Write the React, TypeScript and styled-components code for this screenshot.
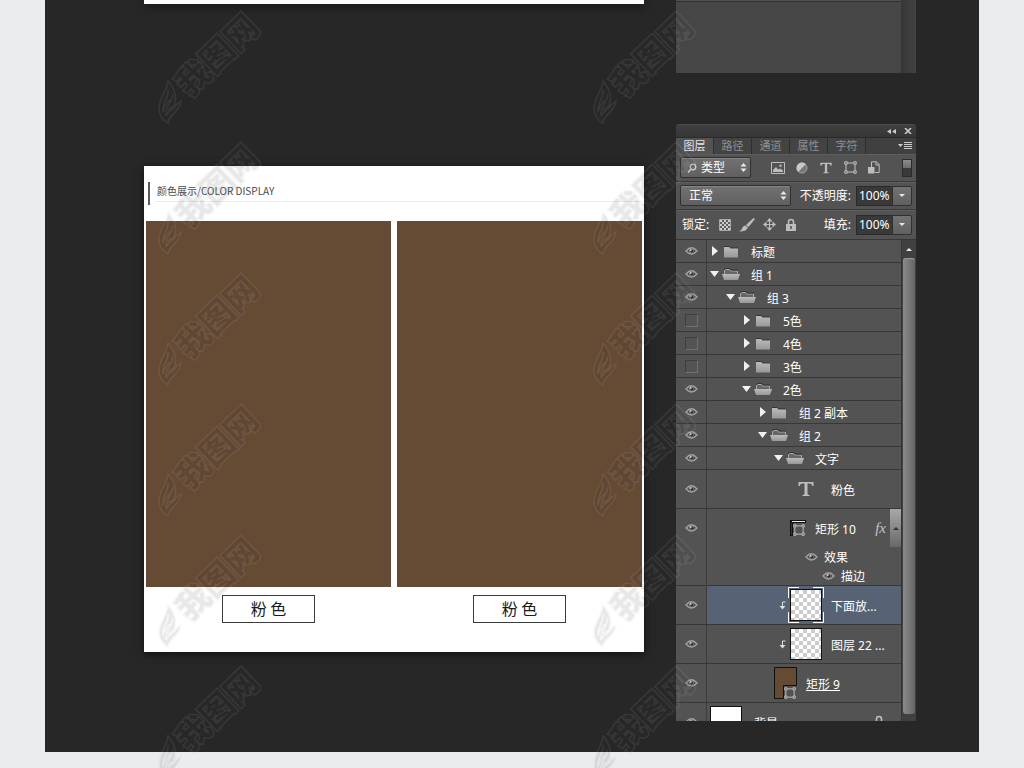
import React from 'react';
import styled, { createGlobalStyle, css } from 'styled-components';

const GlobalStyle = createGlobalStyle`
  *, *::before, *::after { box-sizing: border-box; }
  body {
    margin: 0;
    background: #ebecf0;
    font-family: "Noto Sans", "Noto Sans CJK SC", sans-serif;
    font-size: 12px;
    line-height: 16px;
  }
  button, input, select { font: inherit; color: inherit; }
`;

const Page = styled.div`
  position: relative;
  overflow: hidden;
  padding: 0 45px 16px;
`;

const Canvas = styled.main`
  display: grid;
  grid-template-columns: minmax(0, 1fr) 240px;
  gap: 32px;
  align-items: start;
  padding: 0 63px 31px 99px;
  background: #272727;
`;

const Column = styled.div<{ $gap: number }>`
  display: flex;
  flex-direction: column;
  gap: ${(p) => p.$gap}px;
`;

/* ---------- product cards ---------- */

const Card = styled.section`
  background: #fff;
  box-shadow: 0 2px 8px rgba(0, 0, 0, 0.6);
`;

const CardEnd = styled(Card)`
  height: 4px;
`;

const ColorCard = styled(Card)`
  padding: 16px 2px 29px;
`;

const CardHeader = styled.header`
  display: flex;
  gap: 5px;
  height: 39px;
  padding-left: 2px;
`;

const HeaderBar = styled.span`
  width: 2px;
  height: 23px;
  background: #5a5a5a;
`;

const CardTitle = styled.h2`
  flex: 1;
  height: 20px;
  margin: 0;
  padding: 1px 2px;
  border-bottom: 1px solid #ececec;
  color: #4a4a4a;
  font: 400 10px/16px "Noto Sans CJK SC", sans-serif;
`;

const Swatches = styled.div`
  display: grid;
  grid-template-columns: 1fr 1fr;
  gap: 6px;
`;

const Figure = styled.figure`
  display: flex;
  flex-direction: column;
  align-items: center;
  gap: 8px;
  margin: 0;
`;

const Swatch = styled.div`
  width: 100%;
  aspect-ratio: 245 / 366;
  background: #654a34;
`;

const SwatchName = styled.figcaption`
  width: 93px;
  height: 28px;
  border: 1px solid #3c3c3c;
  color: #1c1c1c;
  text-align: center;
  font: 400 16px/25px "Noto Sans CJK SC", sans-serif;
`;

/* ---------- panels ---------- */

const PanelEnd = styled.div`
  display: grid;
  grid-template-columns: 1fr 15px;
  height: 73px;
`;

const PanelEndBody = styled.div`
  border-top: 1px solid #505050;
  background: #464646;
  box-shadow: inset 0 1px 0 #333;
`;

const PanelEndTrack = styled.div`
  background: linear-gradient(90deg, #363636, #434343);
`;

const Panel = styled.aside`
  overflow: hidden;
  border-radius: 4px 4px 0 0;
  background: #535353;
  color: #fff;
`;

const TitleBar = styled.div`
  display: flex;
  justify-content: flex-end;
  align-items: center;
  gap: 8px;
  height: 13px;
  padding-right: 4px;
  border-top: 1px solid #4a4a4a;
  background: linear-gradient(#404040, #363636);
`;

const IconButton = styled.button`
  display: flex;
  align-items: center;
  justify-content: center;
  padding: 0;
  border: 0;
  background: none;
  color: #bdbdbd;
`;

const TabBar = styled.div`
  display: flex;
  height: 17px;
  border-top: 1px solid #2a2a2a;
  background: #404040;
`;

const Tab = styled.button<{ $active?: boolean }>`
  width: 38px;
  padding: 0;
  border: 0;
  border-right: 1px solid #2e2e2e;
  background: ${(p) => (p.$active ? '#535353' : '#434343')};
  color: ${(p) => (p.$active ? '#e4e6ea' : '#8e9196')};
  font-size: 11px;
  text-align: center;
`;

const MenuButton = styled(IconButton)`
  margin-left: auto;
  padding-right: 4px;
`;

const ControlRow = styled.div<{ $last?: boolean }>`
  display: flex;
  align-items: center;
  height: ${(p) => (p.$last ? 29 : 28)}px;
  padding: 0 4px;
  border-bottom: ${(p) => (p.$last ? 0 : 1)}px solid #3a3a3a;
  box-shadow: inset 0 1px 0 #5e5e5e;
`;

const SelectBox = styled.div<{ $width: number; $inset?: number }>`
  display: flex;
  align-items: center;
  gap: 4px;
  width: ${(p) => p.$width}px;
  height: 21px;
  padding: 0 3px 0 ${(p) => p.$inset ?? 4}px;
  border: 1px solid #303030;
  border-radius: 2px;
  background: linear-gradient(#727272, #606060);
  box-shadow: inset 0 1px 0 #858585;
`;

const Select = styled.select`
  flex: 1;
  min-width: 0;
  padding: 0;
  border: 0;
  appearance: none;
  background: transparent;
  outline: none;
`;

const IconGroup = styled.div<{ $gap: number; $start: number }>`
  display: flex;
  gap: ${(p) => p.$gap}px;
  margin-left: ${(p) => p.$start}px;
`;

const ToolButton = styled(IconButton)`
  width: 16px;
  height: 16px;
`;

const FilterSwitch = styled.button`
  width: 10px;
  height: 18px;
  margin-left: auto;
  padding: 0;
  border: 1px solid #2b2b2b;
  background: linear-gradient(#8c8c8c, #6e6e6e 50%, #3a3a3a 50%);
`;

const LockLabel = styled.span`
  padding-left: 2px;
`;

const ValueField = styled.label`
  display: flex;
  align-items: center;
  gap: 5px;
  margin-left: auto;
  white-space: nowrap;
`;

const ValueInput = styled.input`
  width: 36px;
  height: 20px;
  padding: 0 0 0 2px;
  border: 1px solid #2a2a2a;
  border-right: 0;
  background: #393939;
`;

const DropButton = styled(IconButton)`
  width: 20px;
  height: 20px;
  border: 1px solid #303030;
  border-radius: 0 2px 2px 0;
  background: linear-gradient(#727272, #606060);
`;

const ListArea = styled.div`
  display: grid;
  grid-template-columns: 1fr 15px;
  grid-template-rows: 481px;
  border-top: 1px solid #373737;
`;

const List = styled.ul`
  margin: 0;
  padding: 0;
  overflow: hidden;
  list-style: none;
`;

const Row = styled.li<{ $height: number }>`
  display: grid;
  grid-template-columns: 31px 1fr;
  height: ${(p) => p.$height}px;
  border-bottom: 1px solid #373737;
`;

const EyeCell = styled.div`
  display: flex;
  justify-content: center;
  align-items: center;
  border-right: 1px solid #3b3b3b;
`;

const TopEyeCell = styled(EyeCell)`
  align-items: flex-start;
  padding-top: 14px;
`;

const HiddenBox = styled.span`
  width: 13px;
  height: 13px;
  border: 1px solid #707070;
  border-top-color: #3e3e3e;
  border-left-color: #3e3e3e;
`;

const RowBody = styled.div<{ $level: number; $selected?: boolean }>`
  padding-left: ${(p) => 3 + p.$level * 16}px;
  ${(p) => p.$selected && css`background: #576375;`}
`;

const Line = styled.div<{ $height: number; $gap?: number }>`
  display: flex;
  align-items: center;
  gap: ${(p) => p.$gap ?? 0}px;
  height: ${(p) => p.$height}px;
  white-space: nowrap;
`;

const Slot = styled.span<{ $width: number; $end?: boolean }>`
  display: flex;
  flex: none;
  align-items: center;
  justify-content: ${(p) => (p.$end ? 'flex-end' : 'center')};
  width: ${(p) => p.$width}px;
`;

const LayerName = styled.span<{ $underline?: boolean }>`
  padding-top: 3px;
  ${(p) => p.$underline && css`text-decoration: underline; text-underline-offset: 1px;`}
`;

const Checker = styled.span`
  width: 32px;
  height: 32px;
  border: 1px solid #111;
  background: repeating-conic-gradient(#ccc 0 25%, #fff 0 50%) 0 0 / 8px 8px;
`;

const SelectionFrame = styled.svg`
  position: absolute;
  top: -2px;
  left: -2px;
`;

const ThumbFrame = styled.span`
  position: relative;
  display: flex;
`;

const WhiteThumb = styled.span`
  width: 32px;
  height: 32px;
  border: 1px solid #111;
  background: #fff;
`;

const RowEnd = styled.span`
  display: flex;
  align-items: center;
  gap: 4px;
  height: 100%;
  margin-left: auto;
`;

const LockEnd = styled(RowEnd)`
  padding-right: 16px;
`;

const Fx = styled.em`
  color: #c4c4c4;
  font: italic 15px/20px "Liberation Serif", serif;
`;

const Collapse = styled.button`
  display: flex;
  align-items: center;
  justify-content: center;
  width: 11px;
  height: 100%;
  padding: 0;
  border: 0;
  background: linear-gradient(#a8a8a8, #686868);
`;

const EffectName = styled.span`
  margin-left: 6px;
  padding-top: 2px;
`;

const Scroll = styled.div`
  display: flex;
  flex-direction: column;
  padding: 0 1px 7px;
  border-left: 1px solid #353535;
  background: #404040;
`;

const ScrollUp = styled(IconButton)`
  height: 18px;
  flex: none;
`;

const Thumb = styled.div`
  flex: 1;
  border-radius: 3px;
  background: linear-gradient(90deg, #898989, #666);
  box-shadow: inset 0 1px 0 #999;
`;

/* ---------- watermark overlay ---------- */

const Marks = styled.div`
  position: absolute;
  inset: 0;
  display: grid;
  grid-template-columns: 435px 110px;
  grid-auto-rows: 131px;
  padding: 8px 0 0 158px;
  overflow: hidden;
  pointer-events: none;
`;

const MarkText = styled.text`
  font: 700 33px "Noto Sans CJK SC", sans-serif;
  paint-order: stroke;
`;

const Mark = () => (
  <svg width="110" height="120" viewBox="0 0 110 120" fill="#383838" stroke="#bbb" strokeWidth="3" opacity="0.11" aria-hidden="true">
    <g strokeWidth="1.5">
      <path d="M10 73C9 84 1 89 1 101c0 7 4 11 9 14 0-8 12-11 13-22-3 3-5 4-7 4 4-9 0-17-6-24Z" />
      <path d="M10 82c1 9-6 12-5 22 1-5 3-8 7-12M15 86c-1 10-8 12-7 22 2-6 9-7 10-11-3 2-6 3-8 5" fill="none" />
    </g>
    <g transform="translate(59 47) rotate(-44)">
      <MarkText textAnchor="middle" y="12">我图网</MarkText>
    </g>
  </svg>
);

/* ---------- icons ---------- */

const Eye = () => (
  <svg width="13" height="10" viewBox="0 0 13 10">
    <path d="M1 5Q6.500-1.500 12 5Q6.500 11 1 5Z" fill="#4a4a4a" stroke="#a2a2a2" strokeWidth="1.300" />
    <circle cx="6.500" cy="4.800" r="2.400" fill="#9a9a9a" />
    <circle cx="6.800" cy="5" r="1.700" fill="#2c2c2c" />
    <circle cx="5.800" cy="4" r="0.900" fill="#d0d0d0" />
  </svg>
);

const UpDown = () => (
  <svg width="7" height="9" viewBox="0 0 7 9" fill="#e8e8e8">
    <path d="M3.500 0 6.500 3.500H.5ZM3.500 9 6.500 5.500H.5Z" />
  </svg>
);

const Down = () => (
  <svg width="6" height="3" viewBox="0 0 6 3" fill="#e8e8e8"><path d="M0 0H6L3 3Z" /></svg>
);

const Up = ({ color = '#e8e8e8' }: { color?: string }) => (
  <svg width="6" height="3" viewBox="0 0 6 3" fill={color}><path d="M0 3H6L3 0Z" /></svg>
);

const Toggle = ({ open }: { open: boolean }) => (
  <svg width="10" height="10" viewBox="0 0 10 10" fill="#f0f0f0">
    {open ? <path d="M0 2H9L4.500 8Z" /> : <path d="M2 0 8 5 2 10Z" />}
  </svg>
);

const Folder = ({ open }: { open: boolean }) => (
  <svg width="18" height="13" viewBox="0 0 18 13">
    <defs>
      <linearGradient id="folderFill" x1="0" y1="0" x2="0" y2="1">
        <stop offset="0" stopColor="#bbb" />
        <stop offset="1" stopColor="#989898" />
      </linearGradient>
    </defs>
    {open ? (
      <>
        <path d="M2.500 6V2.500L4 1.500H7.500L8.500 3H15.500V6" fill="#666" stroke="#a8a8a8" />
        <path d="M2 1.500 4 .5H8L9 2H16" fill="none" stroke="#333" />
        <path d="M0 6H18L16 12H2Z" fill="url(#folderFill)" />
      </>
    ) : (
      <>
        <path d="M2 1.500H7L8.500 3H16" fill="none" stroke="#333" />
        <path d="M2 2H7L8.500 3.500H16V12.500H2Z" fill="url(#folderFill)" />
      </>
    )}
  </svg>
);

const ShapeIcon = ({ size = 13 }: { size?: number }) => (
  <svg width={size} height={size} viewBox="0 0 13 13" fill="none" stroke="#c4c4c4">
    <path d="M3.500 2H9.500M3.500 11H9.500M2 3.500V9.500M11 3.500V9.500" />
    <path d="M.8.8h2.400v2.400H.8ZM9.800.8h2.400v2.400H9.800ZM.8 9.800h2.400v2.400H.8ZM9.800 9.800h2.400v2.400H9.800Z" />
  </svg>
);

const TypeIcon = ({ size }: { size: number }) => (
  <svg width={size} height={size} viewBox="0 0 16 16" fill="#bdbdbd">
    <path d="M.5 1H15.500V5H14.300Q14 2.600 11.500 2.600H9.500V12.800Q9.500 14 11.500 14V15H4.500V14Q6.500 14 6.500 12.800V2.600H4.500Q2 2.600 1.700 5H.5Z" />
  </svg>
);

const Lock = () => (
  <svg width="12" height="14" viewBox="0 0 12 14">
    <path d="M3.500 6V4a2.500 2.500 0 0 1 5 0V6" fill="none" stroke="#bdbdbd" strokeWidth="1.600" />
    <path d="M1 6H11V13H1Z" fill="#bdbdbd" />
    <path d="M5.200 8H6.800V11H5.200Z" fill="#555" />
  </svg>
);

const ClipArrow = () => (
  <svg width="7" height="9" viewBox="0 0 7 9">
    <path d="M6.500 1H3.500V6" fill="none" stroke="#ddd" />
    <path d="M.5 5H6.500L3.500 8.500Z" fill="#ddd" />
  </svg>
);

const ImageIcon = () => (
  <svg width="14" height="12" viewBox="0 0 14 12">
    <path d="M.5.5H13.500V11.500H.5Z" fill="none" stroke="#bdbdbd" />
    <path d="M2 10V8L5 5 7 7.500 9 6.500 12 8.500V10Z" fill="#bdbdbd" />
    <circle cx="9.500" cy="3.800" r="1.200" fill="#bdbdbd" />
  </svg>
);

const AdjustIcon = () => (
  <svg width="12" height="12" viewBox="0 0 12 12">
    <circle cx="6" cy="6" r="5" fill="#777" stroke="#a4a4a4" />
    <path d="M9.900 2.100A5.500 5.500 0 0 0 2.100 9.900Z" fill="#c8c8c8" />
  </svg>
);

const SmartIcon = () => (
  <svg width="12" height="13" viewBox="0 0 12 13">
    <path d="M3.500 6V.8H8.500L11.200 3.500V11.500H7" fill="none" stroke="#bdbdbd" />
    <path d="M8 1V4H11" fill="none" stroke="#bdbdbd" />
    <path d="M0 6H6.500V12.500H0Z" fill="#bdbdbd" />
  </svg>
);

const PixelsIcon = () => (
  <svg width="12" height="12" viewBox="0 0 12 12">
    <path d="M.5.5H11.500V11.500H.5Z" fill="#606060" stroke="#a8a8a8" />
    <path d="M1 1h2v2H1ZM5 1h2v2H5ZM9 1h2v2H9ZM3 3h2v2H3ZM7 3h2v2H7ZM1 5h2v2H1ZM5 5h2v2H5ZM9 5h2v2H9ZM3 7h2v2H3ZM7 7h2v2H7ZM1 9h2v2H1ZM5 9h2v2H5ZM9 9h2v2H9Z" fill="#ccc" />
  </svg>
);

const BrushIcon = () => (
  <svg width="16" height="14" viewBox="0 0 16 14" fill="#bdbdbd">
    <path d="M14.500 0 16 1 9.500 9 7 7Z" />
    <path d="M6.500 7.500 8.800 9.500Q8 13.500 0 13.500 3 12 3.500 9.500 4.500 7.500 6.500 7.500Z" />
  </svg>
);

const MoveIcon = () => (
  <svg width="13" height="13" viewBox="0 0 13 13" fill="#bdbdbd">
    <path d="M6.500 0 9.500 3.500H3.500ZM6.500 13 9.500 9.500H3.500ZM0 6.500 3.500 3.500V9.500ZM13 6.500 9.500 3.500V9.500Z" />
    <path d="M6.500 3V10M3 6.500H10" stroke="#bdbdbd" />
  </svg>
);

const RectTenIcon = () => (
  <svg width="16" height="17" viewBox="0 0 16 17">
    <path d="M0 0H16V3H3V16H0Z" fill="#111" />
    <path d="M2 1.500H15" stroke="#e6e6e6" />
    <path d="M1.500 3V15" stroke="#4b2d24" />
    <g transform="translate(3 4)"><ShapeIcon size={12} /></g>
  </svg>
);

const RectNineIcon = () => (
  <svg width="23" height="32" viewBox="0 0 23 32">
    <path d="M.5.5H22.500V18.500H9.500V31.500H.5Z" fill="#654a34" stroke="#111" />
    <g transform="translate(10 20)"><ShapeIcon size={12} /></g>
  </svg>
);

/* ---------- layers ---------- */

type Group = { name: string; level: number; open: boolean; visible: boolean };

const groups: Group[] = [
  { name: '标题', level: 0, open: false, visible: true },
  { name: '组 1', level: 0, open: true, visible: true },
  { name: '组 3', level: 1, open: true, visible: true },
  { name: '5色', level: 2, open: false, visible: false },
  { name: '4色', level: 2, open: false, visible: false },
  { name: '3色', level: 2, open: false, visible: false },
  { name: '2色', level: 2, open: true, visible: true },
  { name: '组 2 副本', level: 3, open: false, visible: true },
  { name: '组 2', level: 3, open: true, visible: true },
  { name: '文字', level: 4, open: true, visible: true },
];

const Visibility = ({ name, visible = true }: { name: string; visible?: boolean }) => (
  <IconButton aria-label={`${name} 可见性`} aria-pressed={visible}>
    {visible ? <Eye /> : <HiddenBox />}
  </IconButton>
);

const GroupRow = ({ name, level, open, visible }: Group) => (
  <Row $height={23}>
    <EyeCell><Visibility name={name} visible={visible} /></EyeCell>
    <RowBody $level={level}>
      <Line $height={22}>
        <IconButton aria-label={name} aria-expanded={open}><Slot $width={10}><Toggle open={open} /></Slot></IconButton>
        <Slot $width={22}><Folder open={open} /></Slot>
        <Slot $width={9} />
        <LayerName>{name}</LayerName>
      </Line>
    </RowBody>
  </Row>
);

type LayerProps = {
  name: string;
  level: number;
  height?: number;
  gap?: number;
  selected?: boolean;
  clipped?: boolean;
  underline?: boolean;
  thumb: React.ReactNode;
  end?: React.ReactNode;
  children?: React.ReactNode;
};

const LayerRow = ({ name, level, height = 39, gap = 9, selected, clipped, underline, thumb, end, children }: LayerProps) => {
  const Cell = children ? TopEyeCell : EyeCell;
  return (
    <Row $height={height}>
      <Cell><Visibility name={name} /></Cell>
      <RowBody $level={level} $selected={selected}>
        <Line $height={38}>
          {clipped && <Slot $width={16}><ClipArrow /></Slot>}
          <Line $height={38} $gap={gap}>
            {thumb}
            <LayerName $underline={underline}>{name}</LayerName>
          </Line>
          {end}
        </Line>
        {children}
      </RowBody>
    </Row>
  );
};

const Effect = ({ name, offset }: { name: string; offset: number }) => (
  <Line $height={19}>
    <Slot $width={offset} $end><Visibility name={name} /></Slot>
    <EffectName>{name}</EffectName>
  </Line>
);

const Percent = ({ label }: { label: string }) => (
  <>
    <ValueField>
      {label}:
      <ValueInput defaultValue="100%" />
    </ValueField>
    <DropButton aria-label={`${label} 选项`}><Down /></DropButton>
  </>
);

const LayersPanel = () => (
  <Panel>
    <TitleBar>
      <IconButton aria-label="折叠">
        <svg width="9" height="5" viewBox="0 0 9 5" fill="#ccc"><path d="M4 0V5L0 2.500ZM9 0V5L5 2.500Z" /></svg>
      </IconButton>
      <IconButton aria-label="关闭">
        <svg width="8" height="6" viewBox="0 0 8 6" stroke="#ccc" strokeWidth="1.600"><path d="M1 0 7 6M7 0 1 6" /></svg>
      </IconButton>
    </TitleBar>
    <TabBar role="tablist">
      {['图层', '路径', '通道', '属性', '字符'].map((t, i) => (
        <Tab key={t} role="tab" aria-selected={i === 0} $active={i === 0}>{t}</Tab>
      ))}
      <MenuButton aria-label="面板菜单">
        <svg width="14" height="8" viewBox="0 0 14 8" fill="#ccc"><path d="M0 2H5L2.500 5Z" /><path d="M6 .5H14M6 2.500H14M6 4.500H14M6 6.500H14" stroke="#ccc" /></svg>
      </MenuButton>
    </TabBar>
    <ControlRow>
      <SelectBox $width={71} $inset={6}>
        <svg width="10" height="10" viewBox="0 0 10 10" fill="none" stroke="#d0d0d0" strokeWidth="1.300"><circle cx="6" cy="4" r="2.800" /><path d="M4 6 1 9.500" /></svg>
        <Select aria-label="过滤类型" defaultValue="类型"><option>类型</option></Select>
        <UpDown />
      </SelectBox>
      <IconGroup $gap={8} $start={19}>
        <ToolButton aria-label="像素图层"><ImageIcon /></ToolButton>
        <ToolButton aria-label="调整图层"><AdjustIcon /></ToolButton>
        <ToolButton aria-label="文字图层"><TypeIcon size={12} /></ToolButton>
        <ToolButton aria-label="形状图层"><ShapeIcon /></ToolButton>
        <ToolButton aria-label="智能对象"><SmartIcon /></ToolButton>
      </IconGroup>
      <FilterSwitch role="switch" aria-checked="true" aria-label="过滤开关" />
    </ControlRow>
    <ControlRow>
      <SelectBox $width={111} $inset={8}>
        <Select aria-label="混合模式" defaultValue="正常"><option>正常</option></Select>
        <UpDown />
      </SelectBox>
      <Percent label="不透明度" />
    </ControlRow>
    <ControlRow $last>
      <LockLabel>锁定:</LockLabel>
      <IconGroup $gap={6} $start={8}>
        <ToolButton aria-label="锁定透明像素"><PixelsIcon /></ToolButton>
        <ToolButton aria-label="锁定图像像素"><BrushIcon /></ToolButton>
        <ToolButton aria-label="锁定位置"><MoveIcon /></ToolButton>
        <ToolButton aria-label="锁定全部"><Lock /></ToolButton>
      </IconGroup>
      <Percent label="填充" />
    </ControlRow>
    <ListArea>
      <List>
        {groups.map((g) => <GroupRow key={g.name} {...g} />)}
        <LayerRow name="粉色" level={5} thumb={<Slot $width={32}><TypeIcon size={16} /></Slot>} />
        <LayerRow
          name="矩形 10"
          level={5}
          height={77}
          thumb={<RectTenIcon />}
          end={<RowEnd><Fx>fx</Fx><Collapse aria-label="折叠效果"><Up color="#333" /></Collapse></RowEnd>}
        >
          <Effect name="效果" offset={28} />
          <Effect name="描边" offset={45} />
        </LayerRow>
        <LayerRow
          name="下面放..."
          level={4}
          clipped
          selected
          thumb={
            <ThumbFrame>
              <Checker />
              <SelectionFrame width="36" height="36" viewBox="0 0 36 36" fill="none" stroke="#fff">
                <path d="M.5 11V.5H11M25 .5H35.500V11M35.500 25V35.500H25M11 35.500H.5V25" />
              </SelectionFrame>
            </ThumbFrame>
          }
        />
        <LayerRow name="图层 22 ..." level={4} clipped thumb={<Checker />} />
        <LayerRow name="矩形 9" level={4} underline thumb={<RectNineIcon />} />
        <LayerRow name="背景" level={0} gap={12} thumb={<WhiteThumb />} end={<LockEnd><Lock /></LockEnd>} />
      </List>
      <Scroll>
        <ScrollUp aria-label="向上滚动"><Up /></ScrollUp>
        <Thumb />
      </Scroll>
    </ListArea>
  </Panel>
);

export default function App() {
  return (
    <Page>
      <GlobalStyle />
      <Canvas>
        <Column $gap={162}>
          <CardEnd />
          <ColorCard>
            <CardHeader>
              <HeaderBar />
              <CardTitle>颜色展示/COLOR DISPLAY</CardTitle>
            </CardHeader>
            <Swatches>
              {['first', 'second'].map((id) => (
                <Figure key={id}>
                  <Swatch />
                  <SwatchName>粉 色</SwatchName>
                </Figure>
              ))}
            </Swatches>
          </ColorCard>
        </Column>
        <Column $gap={51}>
          <PanelEnd>
            <PanelEndBody />
            <PanelEndTrack />
          </PanelEnd>
          <LayersPanel />
        </Column>
      </Canvas>
      <Marks>
        {Array.from({ length: 12 }, (_, i) => <Mark key={i} />)}
      </Marks>
    </Page>
  );
}
